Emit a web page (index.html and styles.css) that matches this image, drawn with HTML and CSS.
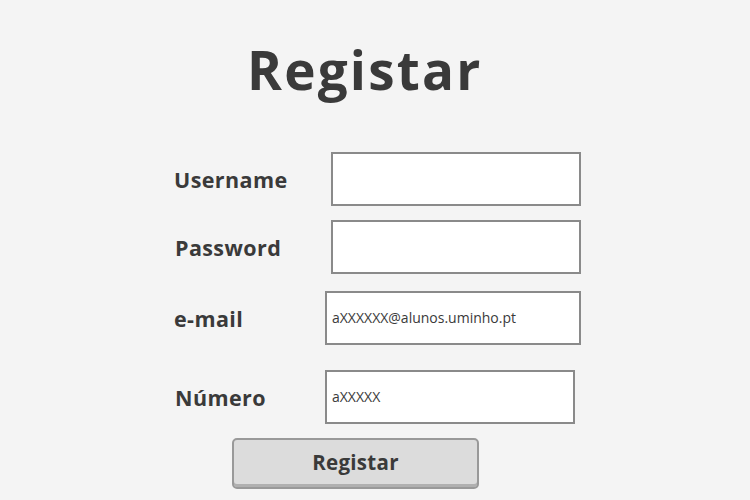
FILE: index.html
```html
<!DOCTYPE html>
<html lang="pt">
<head>
<meta charset="utf-8">
<title>Registar</title>
<link rel="stylesheet" href="styles.css">
</head>
<body>
<main class="page">
  <h1 class="title">Registar</h1>
  <form class="form">
    <div class="row row-user">
      <label class="label label-wide">Username</label>
      <input class="field field-wide" type="text" value="">
    </div>
    <div class="row row-pass">
      <label class="label label-wide">Password</label>
      <input class="field field-wide" type="password" value="">
    </div>
    <div class="row row-mail">
      <label class="label label-narrow">e-mail</label>
      <input class="field field-mail" type="text" value="aXXXXXX@alunos.uminho.pt">
    </div>
    <div class="row row-num">
      <label class="label label-narrow">Número</label>
      <input class="field field-num" type="text" value="aXXXXX">
    </div>
    <div class="actions">
      <button class="btn" type="button">Registar</button>
    </div>
  </form>
</main>
</body>
</html>
```
FILE: styles.css
```css
html, body {
  margin: 0;
  padding: 0;
  background: #f4f4f4;
  width: 750px;
  height: 500px;
  overflow: hidden;
}
.page {
  font-family: "Open Sans", "DejaVu Sans", sans-serif;
  color: #3a3a3a;
  padding-top: 30px;
}
.title {
  margin: 0 0 0 247px;
  font-size: 53px;
  font-weight: 700;
  line-height: 80px;
  letter-spacing: 2.2px;
}
.form {
  margin: 42px 0 0 174px;
  display: flex;
  flex-direction: column;
}
.row {
  display: flex;
  align-items: center;
  height: 54px;
}
.row-pass { margin-top: 14px; }
.row-mail { margin-top: 17px; }
.row-num { margin-top: 25px; }
.label {
  font-size: 21.5px;
  font-weight: 700;
  letter-spacing: 0.4px;
  flex: none;
}
.row-pass .label, .row-num .label { padding-left: 1px; }
.label-wide { width: 157px; }
.label-narrow { width: 151px; }
.row-pass .label-wide { width: 156px; }
.row-num .label-narrow { width: 150px; }
.field {
  box-sizing: border-box;
  height: 54px;
  margin: 0;
  border: 2px solid #8a8a8a;
  background: #ffffff;
  padding: 0 0 2px 5px;
  font-family: "Open Sans", "DejaVu Sans", sans-serif;
  font-size: 14px;
  color: #3a3a3a;
  outline: none;
}
.field-wide { width: 250px; }
.field-mail { width: 256px; }
.field-num { width: 250px; }
.actions {
  margin-top: 14px;
  margin-left: 58px;
}
.btn {
  box-sizing: border-box;
  width: 247px;
  height: 51px;
  background: #dcdcdc;
  border: 2px solid #999999;
  border-radius: 5px;
  box-shadow: inset 0 -3px 0 #b0b0b0;
  font-family: "Open Sans", "DejaVu Sans", sans-serif;
  font-size: 20.5px;
  font-weight: 700;
  letter-spacing: 0.3px;
  color: #3a3a3a;
  padding: 0 0 3px 0;
}
```
